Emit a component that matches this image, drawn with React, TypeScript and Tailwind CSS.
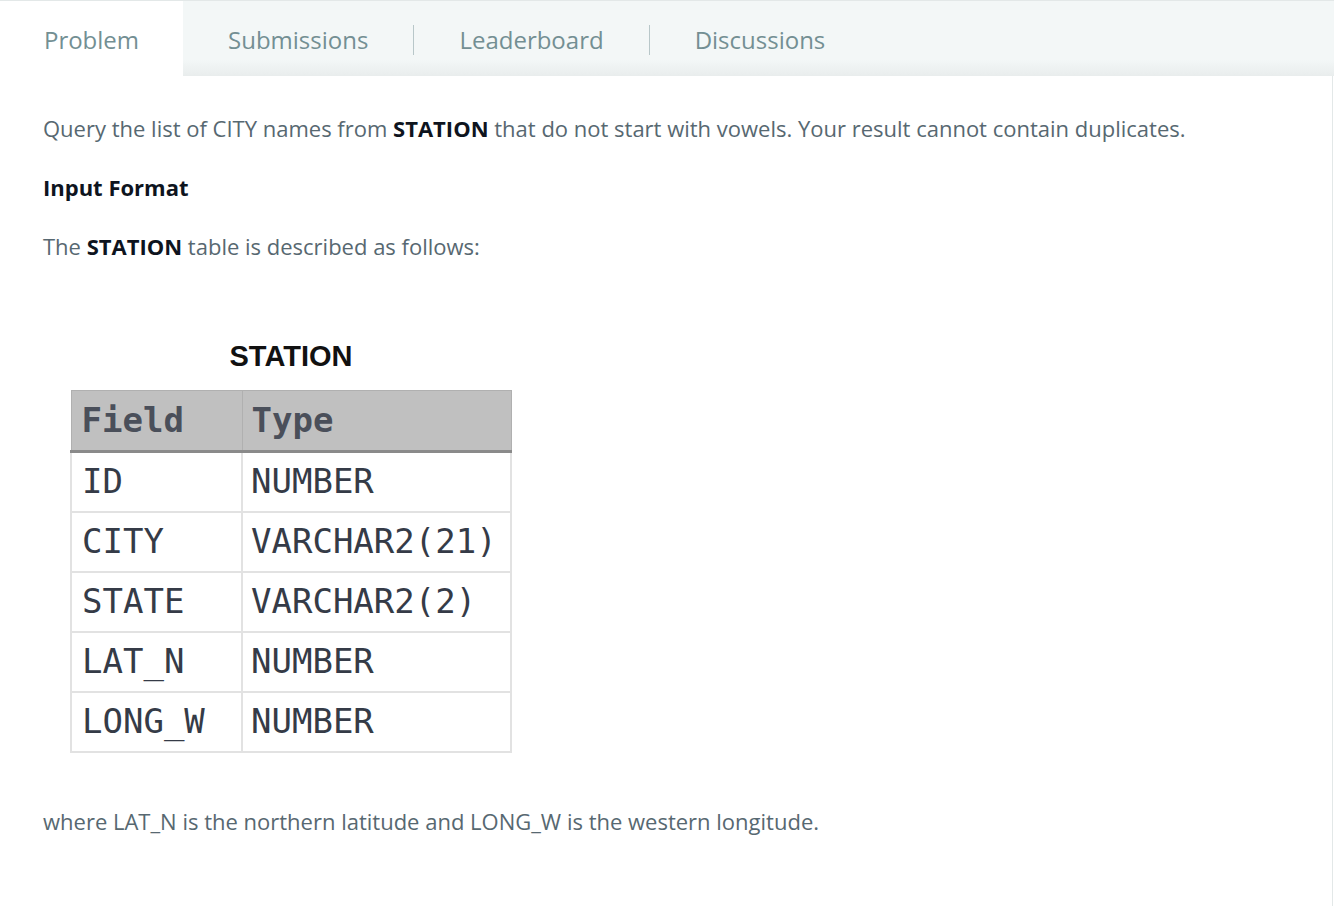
const rows: [string, string][] = [
  ["ID", "NUMBER"],
  ["CITY", "VARCHAR2(21)"],
  ["STATE", "VARCHAR2(2)"],
  ["LAT_N", "NUMBER"],
  ["LONG_W", "NUMBER"],
];

const tabs = ["Submissions", "Leaderboard", "Discussions"];

export default function App() {
  return (
    <div className="min-h-[906px] w-[1334px] bg-white font-['Open_Sans',sans-serif] text-[22px] text-[#576871]">
      {/* tab bar */}
      <div className="flex h-[76px] border-t border-[#e3e8e8] bg-[linear-gradient(to_bottom,#f3f7f7_0%,#f3f7f7_78%,#e9eded_100%)] text-[24px] text-[#738f93]">
        <div className="flex h-full w-[183px] items-center justify-center bg-white pt-[3px]">Problem</div>
        {tabs.map((t, i) => (
          <div key={t} className="flex h-full items-center">
            <div className="px-[45px] pt-[3px]">{t}</div>
            {i < tabs.length - 1 && <div className="mt-[3px] h-[30px] w-px bg-[#b8c7c9]" />}
          </div>
        ))}
      </div>

      {/* content */}
      <div className="mr-[1px] min-h-[830px] border-r border-[#e3e8e8] px-[43px] pt-[35px]">
        <p className="leading-[34px]">
          Query the list of CITY names from <b className="text-[#0e141e]">STATION</b> that do not start with vowels. Your result cannot contain duplicates.
        </p>
        <p className="mt-[25px] font-bold leading-[34px] text-[#0e141e]">Input Format</p>
        <p className="mt-[25px] leading-[34px]">
          The <b className="text-[#0e141e]">STATION</b> table is described as follows:
        </p>

        <div className="ml-[27px] mt-[76px] w-[442px]">
          <div className="text-center font-['Liberation_Sans',sans-serif] text-[29px] font-bold leading-[34px] text-[#111]">STATION</div>
          <table className="mt-[17px] w-full border-collapse font-['DejaVu_Sans_Mono',monospace] text-[34px] text-[#353b47]">
            <thead>
              <tr className="h-[61px] border-b-[3px] border-[#8a8a8a] bg-[#c0c0c0]">
                <th className="w-[171px] border border-[#b0b0b0] px-[10px] text-left font-bold text-[#4a4f5a]">Field</th>
                <th className="border border-[#b0b0b0] px-[9px] text-left font-bold text-[#4a4f5a]">Type</th>
              </tr>
            </thead>
            <tbody>
              {rows.map(([f, t]) => (
                <tr key={f} className="h-[60px]">
                  <td className="border-2 border-[#e2e2e2] px-[10px] font-normal">{f}</td>
                  <td className="border-2 border-[#e2e2e2] px-[8px] font-normal">{t}</td>
                </tr>
              ))}
            </tbody>
          </table>
        </div>

        <p className="mt-[51px] leading-[34px]">where LAT_N is the northern latitude and LONG_W is the western longitude.</p>
      </div>
    </div>
  );
}
